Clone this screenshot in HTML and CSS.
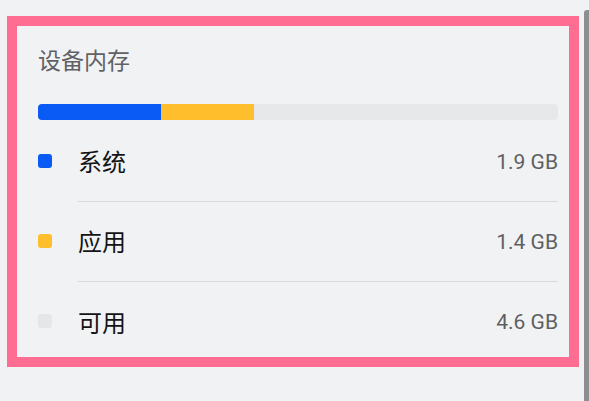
FILE: index.html
```html
<!DOCTYPE html>
<html>
<head>
  <title>设备内存</title>
  <meta name="viewport" content="width=device-width, initial-scale=1.0">
  <link rel="stylesheet" href="styles.css">
</head>
<body>
  <div class="frame">
    <div class="card">
      <div class="title">设备内存</div>

      <div class="bar">
        <div class="seg seg-system" style="width: 123px"></div>
        <div class="seg seg-apps" style="width: 93px"></div>
      </div>

      <div class="list">
        <div class="row">
          <span class="dot dot-system"></span>
          <div class="row-main">
            <span class="label">系统</span>
            <span class="value">1.9 GB</span>
          </div>
        </div>
        <div class="row">
          <span class="dot dot-apps"></span>
          <div class="row-main">
            <span class="label">应用</span>
            <span class="value">1.4 GB</span>
          </div>
        </div>
        <div class="row">
          <span class="dot dot-free"></span>
          <div class="row-main last">
            <span class="label">可用</span>
            <span class="value">4.6 GB</span>
          </div>
        </div>
      </div>
    </div>
  </div>

  <!-- edge of the panel next to this one -->
  <div class="edge"></div>
</body>
</html>
```

FILE: styles.css
```css
body {
  margin: 0;
  background: #f1f2f4;
  font-family: "Noto Sans", "Noto Sans CJK SC", sans-serif;
  overflow: hidden;
}

.frame {
  margin: 16px 0 0 7px;
  width: 552px;
  height: 331px;
  border: 10px solid #ff6d93;
  overflow: hidden;
}

.card {
  padding: 0 11px 0 21px;
}

.title {
  font-family: "Noto Sans CJK SC", sans-serif;
  font-size: 23px;
  line-height: 30px;
  color: #606165;
  padding-top: 18px;
}

.bar {
  display: flex;
  height: 16px;
  margin-top: 30px;
  border-radius: 4px;
  background: #e7e8ea;
  overflow: hidden;
}

.seg-system {
  background: #0a5af6;
}

.seg-apps {
  background: #ffbf2d;
}

.list {
  margin-top: 2px;
}

.row {
  display: flex;
  align-items: center;
  height: 80px;
}

.dot {
  width: 14px;
  height: 14px;
  border-radius: 3px;
  flex-shrink: 0;
  margin-top: -2px;
}

.dot-system {
  background: #0a5af6;
}

.dot-apps {
  background: #ffbf2d;
}

.dot-free {
  background: #e5e6e8;
}

.row-main {
  flex: 1;
  height: 79px;
  margin-left: 26px;
  display: flex;
  align-items: center;
  justify-content: space-between;
  border-bottom: 1px solid #d9dadd;
}

.row-main.last {
  border-bottom: none;
}

.label {
  font-family: "Noto Sans CJK SC", sans-serif;
  font-size: 24px;
  font-weight: 400;
  color: #141414;
  margin-top: -2px;
}

.value {
  font-family: Roboto, "Noto Sans", sans-serif;
  font-size: 21px;
  color: #5e5f62;
}

.edge {
  position: fixed;
  top: 10px;
  left: 584px;
  width: 6px;
  height: 400px;
  background: #8e8e8e;
  border-radius: 3px 0 0 0;
  z-index: 10;
}
```
